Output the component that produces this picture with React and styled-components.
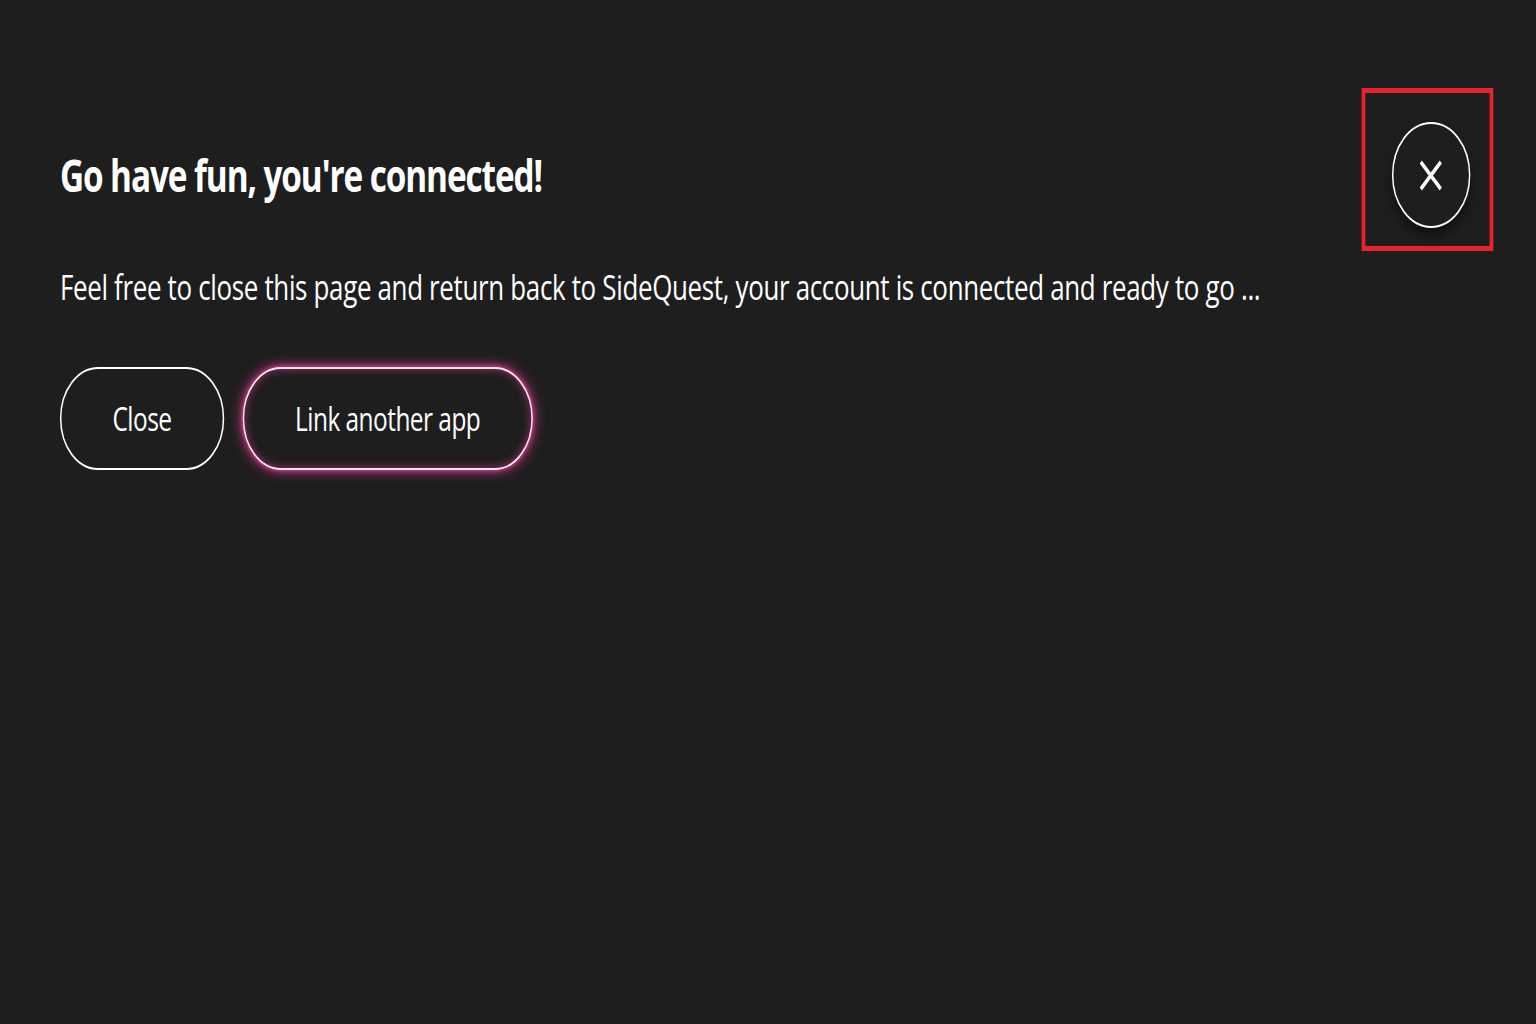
import React from 'react';
import styled, { createGlobalStyle } from 'styled-components';

// the capture is squeezed sideways, so the whole page is drawn at full width and narrowed
const SQUEEZE = 0.74;

const GlobalStyle = createGlobalStyle`
html, body {
  margin: 0;
  padding: 0;
  background: #1e1e1e;
  overflow: hidden;
}
body {
  font-family: "Open Sans", "Noto Sans", "Liberation Sans", sans-serif;
  color: #ffffff;
}
`;

const Stage = styled.div`
width: ${1536 / SQUEEZE}px;
height: 1024px;
transform: scaleX(${SQUEEZE});
transform-origin: 0 0;
background: #1e1e1e;
`;

const Page = styled.main`
padding: 88px 58px 0 81px;
display: flex;
flex-direction: column;
`;

const Header = styled.header`
display: flex;
justify-content: space-between;
align-items: flex-start;
`;

const Title = styled.h1`
margin: 64px 0 0;
font-size: 45px;
line-height: 1;
font-weight: 700;
letter-spacing: -1.45px;
`;

const Highlight = styled.div`
border: 5px solid #e8232b;
padding: 29px 26px 18px 36px;
`;

const RoundClose = styled.button`
width: 106px;
height: 106px;
border-radius: 50%;
border: 2px solid #ffffff;
background: #1e1e1e;
box-shadow: 0 8px 12px rgba(0, 0, 0, 0.45);
display: flex;
align-items: center;
justify-content: center;
padding: 0;
cursor: pointer;
`;

const Message = styled.p`
margin: 18px 0 0;
font-size: 35px;
line-height: 1;
font-weight: 400;
letter-spacing: -0.43px;
`;

const Actions = styled.div`
display: flex;
gap: 25px;
margin-top: 63px;
`;

const PillButton = styled.button`
font-family: inherit;
font-size: 33px;
line-height: 1;
letter-spacing: -0.7px;
color: #ffffff;
background: #1e1e1e;
border-radius: 999px;
padding: 33px 69px;
cursor: pointer;
border: 2px solid ${(p) => (p.$glow ? '#ffe6f3' : '#ffffff')};
box-shadow: ${(p) =>
    p.$glow
        ? '0 0 16px rgba(236, 64, 152, 0.9), 0 0 6px rgba(236, 64, 152, 1), inset 0 0 10px rgba(236, 64, 152, 0.6)'
        : 'none'};
`;

const CrossIcon = () => (
    <svg width="31" height="31" viewBox="0 0 31 31" fill="none">
        <path d="M2 2 L29 29 M29 2 L2 29" stroke="#ffffff" strokeWidth="4.2" strokeLinecap="butt" />
    </svg>
);

const App = () => {
    return (
        <>
            <GlobalStyle />
            <Stage>
                <Page>
                    <Header>
                        <Title>Go have fun, you're connected!</Title>
                        <Highlight>
                            <RoundClose aria-label="Close">
                                <CrossIcon />
                            </RoundClose>
                        </Highlight>
                    </Header>
                    <Message>
                        Feel free to close this page and return back to SideQuest, your account is connected and ready to go ...
                    </Message>
                    <Actions>
                        <PillButton>Close</PillButton>
                        <PillButton $glow>Link another app</PillButton>
                    </Actions>
                </Page>
            </Stage>
        </>
    );
};

export default App;
